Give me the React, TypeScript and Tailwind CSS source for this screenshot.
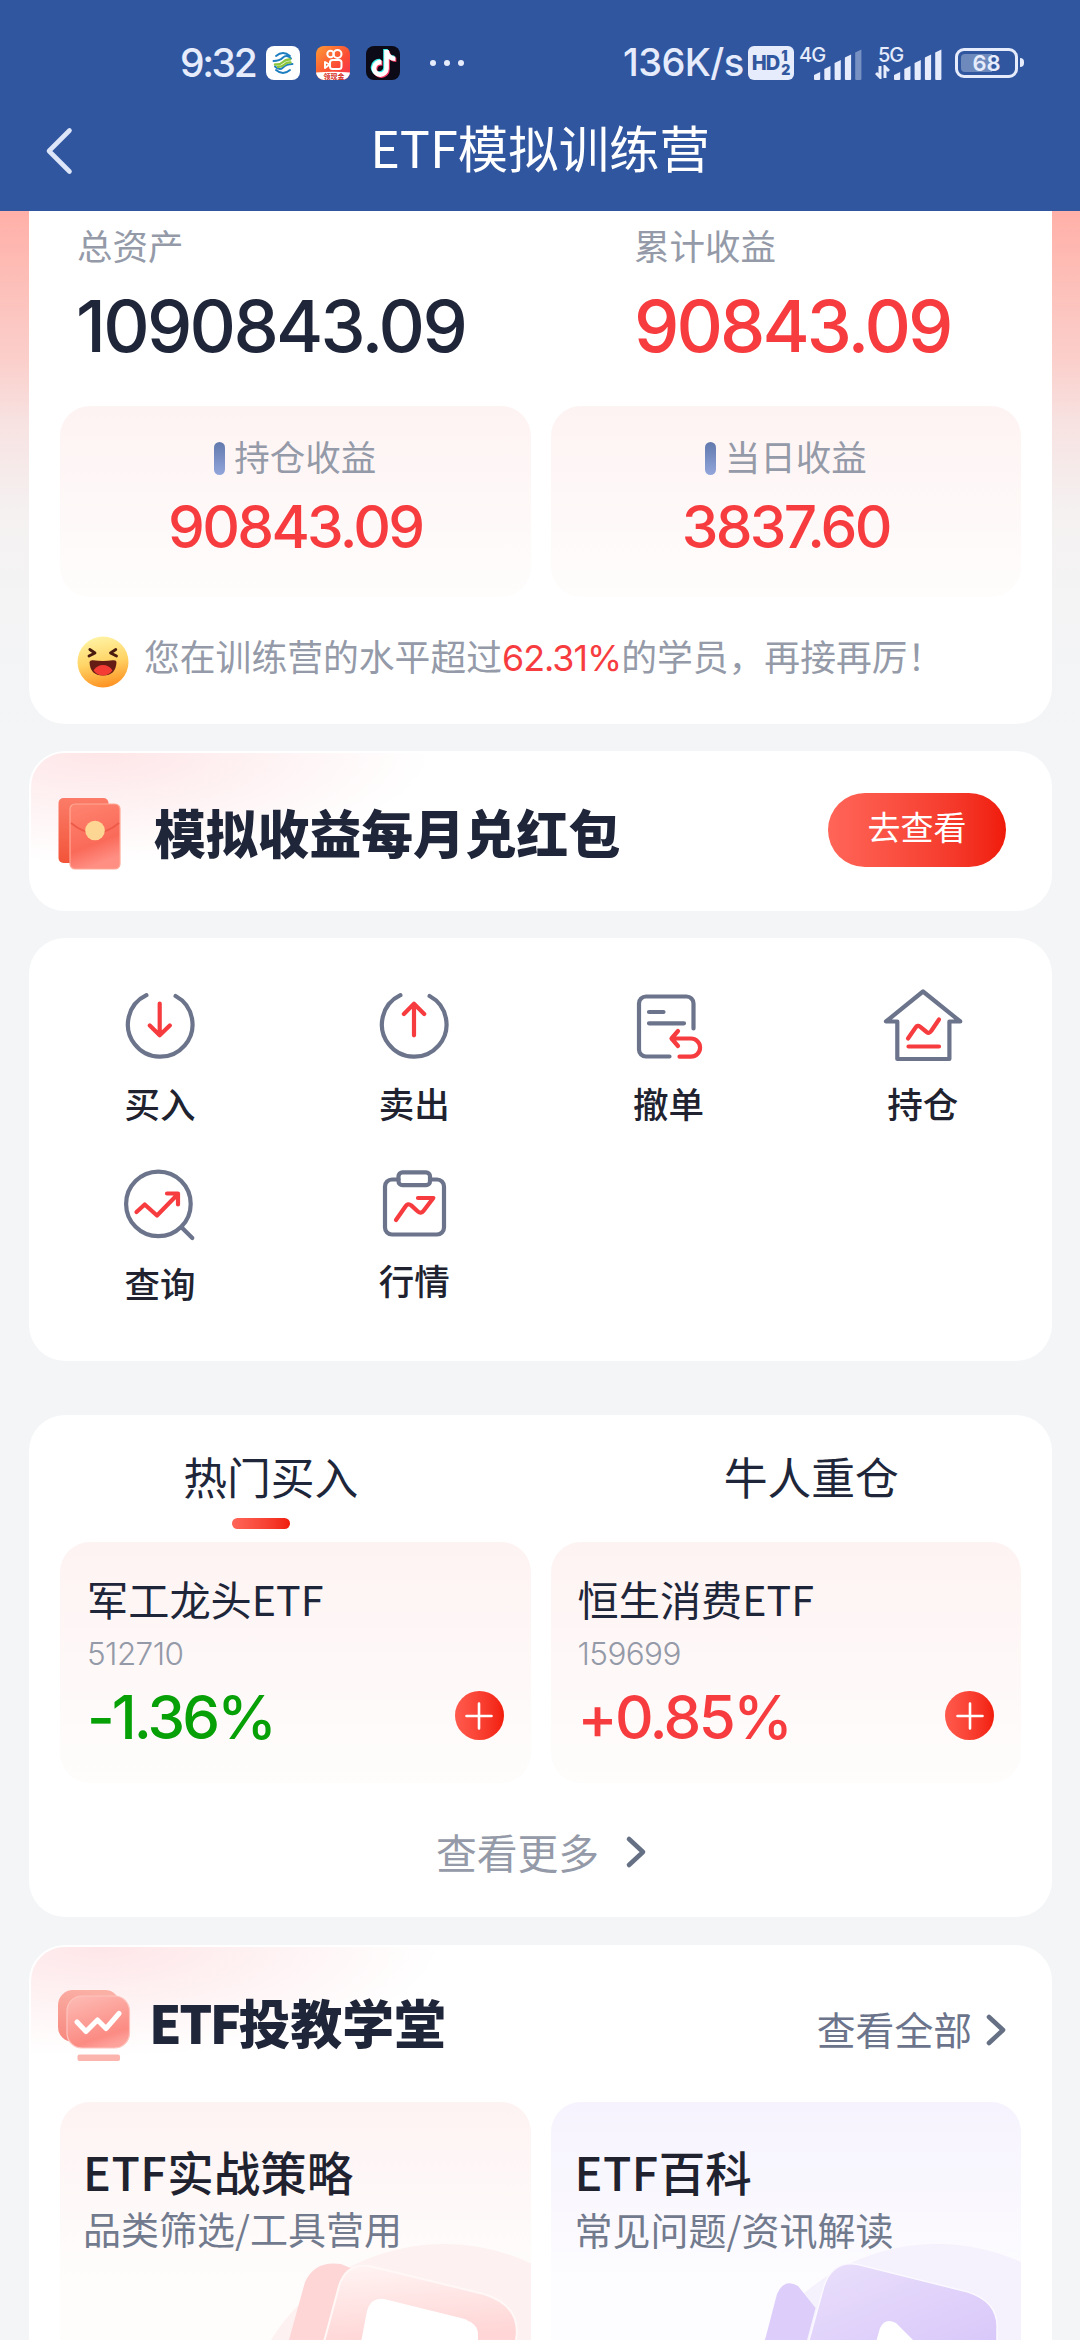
import React from 'react';
import { FaTiktok } from 'react-icons/fa6';

const NUM = "font-['Inter','Noto_Sans_CJK_SC',sans-serif]";

const ACTIONS = [
  { id: 'buy', label: '买入', icon: <BuyIcon />, gap: 'mt-[13px]' },
  { id: 'sell', label: '卖出', icon: <SellIcon />, gap: 'mt-[13px]' },
  { id: 'cancel', label: '撤单', icon: <CancelIcon />, gap: 'mt-[13px]' },
  { id: 'hold', label: '持仓', icon: <HoldIcon />, gap: 'mt-[13px]' },
  { id: 'query', label: '查询', icon: <QueryIcon />, gap: 'mt-4' },
  { id: 'market', label: '行情', icon: <MarketIcon />, gap: 'mt-[13px]' },
];

const HOT_FUNDS = [
  { name: '军工龙头ETF', code: '512710', change: '-1.36%', color: 'text-[#07a007] tracking-[-2.9px]' },
  { name: '恒生消费ETF', code: '159699', change: '+0.85%', color: 'text-[#f73c3f] tracking-[-2.6px]' },
];

function ActionSvg({ children }: { children: React.ReactNode }) {
  return (
    <svg width="80" height="80" viewBox="0 0 80 80" fill="none" stroke="#6b748b" strokeWidth="4.2" strokeLinecap="round" strokeLinejoin="round">
      {children}
    </svg>
  );
}

function BuyIcon() {
  return (
    <ActionSvg>
      <path d="M26.4 9.2A32.3 32.3 0 1 0 55.6 10" />
      <path stroke="#f73c3f" d="M39.7 17.5V49M29.8 39.5L39.7 49.3L49.8 39.5" />
    </ActionSvg>
  );
}

function SellIcon() {
  return (
    <ActionSvg>
      <path d="M26.4 9.2A32.3 32.3 0 1 0 55.6 10" />
      <path stroke="#f73c3f" d="M40 49.3V18M29.9 28L40 17.8L50.2 28" />
    </ActionSvg>
  );
}

function CancelIcon() {
  return (
    <ActionSvg>
      <path d="M64.5 42.5V17.5a7 7 0 0 0-7-7H17a7 7 0 0 0-7 7v46a7 7 0 0 0 7 7h23.5" />
      <path d="M20 26H34.5M20 37.3H55" />
      <path stroke="#f73c3f" d="M49 45L42.5 52.5L49 60M43 52.5H62a9.1 9.1 0 0 1 0 18.2H50.5" />
    </ActionSvg>
  );
}

function HoldIcon() {
  return (
    <ActionSvg>
      <path d="M40 5.5L3 35.5H14.3V73H66.4V35.5H77.3Z" />
      <path stroke="#f73c3f" d="M25 52.5L32.6 41.5Q34.5 38.6 37 40.6L43.6 46Q46.3 48 48.2 45L56 33.5M25.5 60.5H56" />
    </ActionSvg>
  );
}

function QueryIcon() {
  return (
    <ActionSvg>
      <circle cx="38.4" cy="40.9" r="32.3" />
      <path d="M62 64.7L72.3 75" />
      <path stroke="#f73c3f" d="M16.5 49L24.7 41.5L37 52.5L57.5 31.5M47 30.5H58V41.5" />
    </ActionSvg>
  );
}

function MarketIcon() {
  return (
    <ActionSvg>
      <path d="M24.5 16.5H18a7 7 0 0 0-7 7V64.5a7 7 0 0 0 7 7H63a7 7 0 0 0 7-7V23.5a7 7 0 0 0-7-7H56" />
      <rect x="24.5" y="9.3" width="31.5" height="12.9" rx="4" />
      <path stroke="#f73c3f" d="M22 57L31.6 43.2Q34 39.8 37.2 42.4L43.6 48.2Q47 51.4 49.6 47.8L59.3 35H44" />
    </ActionSvg>
  );
}

function Chevron({ className = '' }: { className?: string }) {
  return (
    <svg className={className} width="22" height="34" viewBox="0 0 22 34" fill="none" stroke="#667085" strokeWidth="4.6" strokeLinecap="round" strokeLinejoin="round">
      <path d="M4 4L18 17L4 30" />
    </svg>
  );
}

function SignalBars({ level, className = '' }: { level: number; className?: string }) {
  const heights = [8, 14, 20, 25.5, 30.5];
  return (
    <svg className={className} width="48" height="32" viewBox="0 0 48 32" fill="#e6ecfb">
      {heights.map((h, i) => (
        <path key={h} opacity={i < level ? 1 : 0.4} d={`M${i * 10.3} ${32 - h + 3}l6.2 -3V31a1 1 0 0 1-1 1h-4.2a1 1 0 0 1-1-1z`} />
      ))}
    </svg>
  );
}

function StatusBar() {
  return (
    <div className={`flex h-[83px] items-center pt-[42px] pl-[180px] text-[#e6ecfb] ${NUM}`}>
      <span className="w-[86px] text-[39px] leading-[41px] font-medium tracking-[-2.4px]">9:32</span>
      <svg className="mr-4 shrink-0" width="34" height="34" viewBox="0 0 34 34" fill="none">
        <rect width="34" height="34" rx="8" fill="#fff" />
        <g strokeWidth="1.9" strokeLinecap="round">
          <path stroke="#1d7fc0" d="M10 10q7-6 14 0M7.500 15q6 0 9.500-3.500t8 1M10 24q7 6 14 0M26.500 18q-6 0-9.500 3.500t-8-1" />
          <path stroke="#8cc63f" strokeWidth="2.400" d="M9 18.500q5 .5 8-2.500t7-2.500M12 21q4 0 6.500-2.500t6-2" />
        </g>
      </svg>
      <svg className="mr-4 shrink-0" width="34" height="34" viewBox="0 0 34 34" fill="none">
        <defs>
          <linearGradient id="ks" x1="0" y1="0" x2="1" y2="1">
            <stop stopColor="#ff9a35" />
            <stop offset="0.6" stopColor="#fb4b35" />
            <stop offset="1" stopColor="#f72f52" />
          </linearGradient>
        </defs>
        <rect width="34" height="34" rx="8" fill="url(#ks)" />
        <path d="M0 26.5Q17 25 34 26.5a8 8 0 0 1-8 7.5H8a8 8 0 0 1-8-7.5z" fill="#fff" />
        <g stroke="#fff" strokeWidth="2">
          <circle cx="14.5" cy="8" r="3.2" />
          <circle cx="21.5" cy="8" r="4" />
          <rect x="14" y="14" width="11.5" height="9" rx="2.5" />
          <path d="M13.5 18.5L9 16V22z" strokeLinejoin="round" />
        </g>
        <text x="18" y="33" fontSize="7" fontWeight="700" textAnchor="middle" fill="#d42a22">领现金</text>
      </svg>
      <div className="relative size-[34px] shrink-0 rounded-lg bg-[#0c0a16]">
        <FaTiktok size={27} className="absolute top-[3px] left-[3px] text-[#3df0ea]" />
        <FaTiktok size={27} className="absolute top-[5px] left-[5px] text-[#fb3a64]" />
        <FaTiktok size={27} className="absolute top-1 left-1 text-white" />
      </div>
      <div className="ml-[30px] flex gap-2">
        <i className="size-1.5 rounded-full bg-current" />
        <i className="size-1.5 rounded-full bg-current" />
        <i className="size-1.5 rounded-full bg-current" />
      </div>
      <span className="ml-[159px] w-[125px] text-[38px] leading-[41px] font-medium tracking-[-0.6px] whitespace-nowrap">136K/s</span>
      <div className="flex h-[34px] w-[46px] shrink-0 items-center justify-center rounded-md bg-[#e6ecfb] text-[#31579f]">
        <span className="text-[20px] font-extrabold tracking-[-1px]">HD</span>
        <span className="ml-0.5 flex flex-col text-[14px] leading-[14px] font-extrabold">
          <b>1</b>
          <b>2</b>
        </span>
      </div>
      <div className="flex h-[34px] w-[78px] shrink-0 pl-[5px]">
        <span className="w-[15px] text-[20px] leading-[18px] font-medium tracking-[-1px]">4G</span>
        <SignalBars level={4} className="mt-[2px] shrink-0" />
      </div>
      <div className="flex h-[34px] w-[83px] shrink-0 pl-[3px]">
        <div className="w-[19px]">
          <div className="ml-[3px] h-[19px] w-7 text-[20px] leading-[18px] font-medium tracking-[-1px]">5G</div>
          <svg width="15" height="14" viewBox="0 0 15 14" fill="none" stroke="#e6ecfb" strokeWidth="3">
            <path d="M5 1V12L1 8M10 13V2L14 6" />
          </svg>
        </div>
        <SignalBars level={5} className="mt-[2px] shrink-0" />
      </div>
      <div className="relative flex h-[30px] w-[63px] shrink-0 items-center rounded-[9px] border-[3px] border-current pl-[3px]">
        <div className="h-[18px] w-[31px] rounded-l-[4px] bg-white/30" />
        <span className="absolute inset-0 text-center text-[22px] leading-[25px] font-semibold">68</span>
      </div>
      <div className="ml-0.5 h-[9px] w-1 rounded-r bg-current" />
    </div>
  );
}

function Header() {
  return (
    <header className="h-[211px] bg-[#30569f]">
      <StatusBar />
      <div className="flex h-[128px] items-center">
        <svg className="ml-[44px] mt-2" width="30" height="50" viewBox="0 0 30 50" fill="none" stroke="#dde5f8" strokeWidth="4.6" strokeLinecap="round" strokeLinejoin="round">
          <path d="M25.5 4.500L5 25L25.5 45.5" />
        </svg>
        <h1 className="mr-[74px] flex-1 text-center text-[50.4px] leading-[60px] text-white">ETF模拟训练营</h1>
      </div>
    </header>
  );
}

function Smile() {
  return (
    <svg width="52" height="52" viewBox="0 0 52 52" fill="none" className="shrink-0">
      <defs>
        <linearGradient id="face" x1="0.4" y1="0" x2="0.6" y2="1">
          <stop stopColor="#fff3a4" />
          <stop offset="0.5" stopColor="#ffd465" />
          <stop offset="1" stopColor="#fd9020" />
        </linearGradient>
      </defs>
      <circle cx="26" cy="26" r="25.5" fill="url(#face)" />
      <path d="M12.8 13.5L18 17L12 20M38.800 13.500L33.500 17L39.500 20" stroke="#4a1c10" strokeWidth="2.8" strokeLinecap="round" strokeLinejoin="round" />
      <path d="M12.500 26Q13 24 16 24.300Q26 25.500 36 24.300Q39.500 24 39.500 26Q39 39.500 26 39.500T12.500 26z" fill="#641c14" />
      <path d="M16.500 34.500Q20 29 26 29T35.500 34.500Q31.500 39.500 26 39.500T16.500 34.500z" fill="#f43c34" />
    </svg>
  );
}

function StatBox({ label, value }: { label: string; value: string }) {
  return (
    <div className="h-[191px] rounded-[30px] bg-linear-to-b from-[#fef3f3] to-[#fefdfc] pt-[30px] text-center">
      <div className="flex h-10 items-center justify-center">
        <i className="mt-1 mr-[9px] h-[33px] w-[11px] rounded-full bg-linear-to-b from-[#6179ad] to-[#93a6dc]" />
        <span className="text-[35.5px] leading-10 text-[#949aa8]">{label}</span>
      </div>
      <div className={`mt-[15px] text-[58.5px] leading-[72px] font-medium tracking-[-2.7px] text-[#f73c3f] ${NUM}`}>{value}</div>
    </div>
  );
}

function AssetsCard() {
  return (
    <section className="h-[513px] rounded-b-[36px] bg-white px-[31px] pt-3.5">
      <div className="flex pl-[17px] text-[35.5px] leading-10 text-[#949aa8]">
        <div className="w-[557px]">总资产</div>
        <div>累计收益</div>
      </div>
      <div className={`mt-[21px] flex pl-[16px] text-[72px] leading-[80px] font-medium ${NUM}`}>
        <div className="w-[558px] tracking-[-2.7px] text-[#20263a]">1090843.09</div>
        <div className="tracking-[-2.9px] text-[#f73c3f]">90843.09</div>
      </div>
      <div className="mt-10 grid grid-cols-2 gap-5">
        <StatBox label="持仓收益" value="90843.09" />
        <StatBox label="当日收益" value="3837.60" />
      </div>
      <div className="mt-[39px] flex items-start pl-[17px]">
        <Smile />
        <p className="ml-[15px] text-[35.8px] leading-[39px] whitespace-nowrap text-[#949aa8]">
          您在训练营的水平超过<span className={`tracking-[-1px] text-[#f73c3f] ${NUM}`}>62.31%</span>的学员，再接再厉！
        </p>
      </div>
    </section>
  );
}

function RedPacketCard() {
  return (
    <section className="mt-[27px] flex h-[160px] items-center rounded-[36px] border-2 border-white bg-white bg-[radial-gradient(ellipse_330px_110px_at_70px_0px,#fee6e8,#ffffff)] pr-[44px] pl-[27px]">
      <svg className="mt-1.5" width="64" height="74" viewBox="0 0 64 74" fill="none">
        <defs>
          <linearGradient id="rpBack" x1="0" y1="0" x2="0" y2="1">
            <stop stopColor="#fb7c68" />
            <stop offset="1" stopColor="#f25439" />
          </linearGradient>
          <linearGradient id="rpFront" x1="0" y1="0" x2="0.3" y2="1">
            <stop stopColor="#fe8570" />
            <stop offset="0.7" stopColor="#fa6a59" />
            <stop offset="1" stopColor="#ff8e83" />
          </linearGradient>
        </defs>
        <rect x="0.5" y="1" width="50" height="65" rx="5" fill="url(#rpBack)" />
        <rect x="12" y="7" width="50" height="65" rx="5" fill="url(#rpFront)" stroke="#ffa896" strokeWidth="1.2" />
        <path d="M13 26Q25 36 37 36T61 26" stroke="#ee5a48" strokeWidth="1.8" />
        <circle cx="37" cy="33.5" r="9.8" fill="#fcd692" />
      </svg>
      <h2 className="mt-0.5 ml-[32px] flex-1 text-[51.8px] leading-[60px] font-black text-[#20263a]">模拟收益每月兑红包</h2>
      <button className="mt-[-2px] h-[74px] w-[178px] rounded-full bg-linear-to-r from-[#ff6558] to-[#f01a08] pb-1.5 text-[33px] text-white">去查看</button>
    </section>
  );
}

function ActionsCard() {
  return (
    <section className="mt-[27px] h-[423px] rounded-[36px] bg-white pt-12 pl-1">
      <div className="grid w-[1017px] grid-cols-4 gap-y-[36px]">
        {ACTIONS.map((a) => (
          <div key={a.id} className="flex flex-col items-center">
            {a.icon}
            <span className={`text-[35.5px] leading-[48px] font-medium text-[#20232f] ${a.gap}`}>{a.label}</span>
          </div>
        ))}
      </div>
    </section>
  );
}

function HotCard() {
  return (
    <section className="mt-[54px] h-[502px] rounded-[36px] bg-white px-[31px] pt-[33px]">
      <div className="-mx-[59px] grid grid-cols-2 text-center text-[43.8px] leading-[56px] text-[#20263a]">
        <span>热门买入</span>
        <span className="pl-0.5">牛人重仓</span>
      </div>
      <div className="mt-[14px] ml-[172px] h-[11px] w-[58px] rounded-full bg-linear-to-r from-[#ff6558] to-[#f01a08]" />
      <div className="mt-[13px] grid grid-cols-2 gap-5">
        {HOT_FUNDS.map((f) => (
          <div key={f.code} className="h-[241px] rounded-[30px] bg-linear-to-b from-[#fef3f3] to-[#fefdfc] px-[27px] pt-[31px]">
            <div className="text-[41.2px] leading-[50px] text-[#20263a]">{f.name}</div>
            <div className={`mt-[11px] text-[31.5px] leading-10 font-light tracking-[-0.6px] text-[#949aa8] ${NUM}`}>{f.code}</div>
            <div className="mt-[3px] flex items-center justify-between">
              <span className={`text-[60px] leading-[80px] font-medium ${NUM} ${f.color}`}>{f.change}</span>
              <div className="mt-[-3px] flex size-[49px] items-center justify-center rounded-full bg-linear-to-r from-[#ff5a4d] to-[#f21c0a]">
                <svg width="28" height="28" viewBox="0 0 28 28" stroke="#fff" strokeWidth="2.6" strokeLinecap="round">
                  <path d="M14 1.5V26.5M1.5 14H26.5" />
                </svg>
              </div>
            </div>
          </div>
        ))}
      </div>
      <div className="mt-[44px] flex items-center justify-center pl-0.5 text-[40.8px] leading-[50px] text-[#949aa8]">
        查看更多
        <Chevron className="ml-[26px]" />
      </div>
    </section>
  );
}

function PinkArt() {
  return (
    <svg className="absolute inset-0" width="471" height="238" viewBox="0 0 471 238" fill="none">
      <defs>
        <linearGradient id="pinkFront" x1="0.2" y1="0" x2="0.4" y2="1">
          <stop stopColor="#fff3f2" />
          <stop offset="1" stopColor="#ffd5d5" />
        </linearGradient>
      </defs>
      <circle cx="384" cy="346" r="204" fill="#fdf1f1" />
      <path d="M229 238L245 180Q255 158 281 162L300 170L270 238z" fill="#fed6d6" />
      <path d="M264 240L279 184Q287 159 313 165L424 192Q462 204 456 238V240z" fill="url(#pinkFront)" stroke="#fff8f7" strokeWidth="2" />
      <path d="M301 240L307 209Q311 195 324 197L401 216Q418 221 418 232V240z" fill="#fff" />
    </svg>
  );
}

function PurpleArt() {
  return (
    <svg className="absolute inset-0" width="471" height="238" viewBox="0 0 471 238" fill="none">
      <defs>
        <linearGradient id="violet" x1="0" y1="0" x2="1" y2="1">
          <stop stopColor="#eadffb" />
          <stop offset="1" stopColor="#d8c8fa" />
        </linearGradient>
      </defs>
      <circle cx="386" cy="346" r="204" fill="#f5f1fd" />
      <path d="M214 238L226 192Q233 176 247 184L264.5 206L256 238z" fill="#dccdfa" />
      <path d="M257.5 240L273 184Q282 158 307 162.5L417 190Q448 200 446 228V240z" fill="url(#violet)" stroke="#fbf9ff" strokeWidth="1.5" />
      <path d="M325 240L329 226Q334 215 345 221L364 240z" fill="#fff" />
    </svg>
  );
}

function SchoolCard() {
  return (
    <section className="mt-[28px] h-[420px] rounded-t-[36px] border-2 border-white bg-white bg-[radial-gradient(ellipse_340px_110px_at_70px_0px,#fee6e8,#ffffff)] px-[29px] pt-[42px]">
      <div className="flex h-[76px] items-start">
        <svg className="-ml-0.5 shrink-0" width="76" height="74" viewBox="-2 0 76 74" fill="none">
          <defs>
            <linearGradient id="schBack" x1="0.5" y1="0" x2="0.2" y2="1">
              <stop stopColor="#fbb0a6" />
              <stop offset="1" stopColor="#f7897f" />
            </linearGradient>
            <linearGradient id="schFront" x1="0.2" y1="0" x2="0.6" y2="1">
              <stop stopColor="#fdb9b2" />
              <stop offset="0.8" stopColor="#fb8b83" />
              <stop offset="1" stopColor="#fda39c" />
            </linearGradient>
          </defs>
          <rect x="-2" y="1" width="62" height="52" rx="15" fill="url(#schBack)" />
          <rect x="7" y="7" width="62.5" height="52" rx="15" fill="url(#schFront)" stroke="#fdc4be" strokeWidth="1.2" />
          <path d="M17 33L26 42.5L37.5 31L46 39.5L59 24.5" stroke="#fff" strokeWidth="5" strokeLinecap="round" strokeLinejoin="round" />
          <rect x="17.5" y="65.5" width="42.5" height="6.5" rx="2" fill="#fcb5ae" />
        </svg>
        <h2 className="mt-[5px] ml-[15px] flex-1 text-[51.8px] leading-[56px] font-black text-[#20263a]">
          <span className="tracking-[-2.5px]">ETF</span>投教学堂
        </h2>
        <span className="mt-[14px] text-[38.8px] leading-[50px] text-[#6b748b]">查看全部</span>
        <Chevron className="mt-[24px] mr-[14px] ml-[13px]" />
      </div>
      <div className="mt-[37px] grid grid-cols-2 gap-5">
        <div className="relative h-[300px] overflow-hidden rounded-[30px] bg-linear-to-b from-[#fef3f3] to-[#fefdfc] to-60%">
          <PinkArt />
          <div className="relative pt-[42px] pl-[23px]">
            <div className="text-[46.5px] leading-[54px] font-medium text-[#20232f]"><span className="tracking-[0.5px]">ETF</span>实战策略</div>
            <div className="mt-[5px] text-[38px] leading-[50px] text-[#727a8e]">品类筛选/工具营用</div>
          </div>
        </div>
        <div className="relative h-[300px] overflow-hidden rounded-[30px] bg-linear-to-b from-[#f6f3fe] to-[#fdfcfe] to-60%">
          <PurpleArt />
          <div className="relative pt-[42px] pl-[24px]">
            <div className="text-[46.5px] leading-[54px] font-medium text-[#20232f]"><span className="tracking-[0.5px]">ETF</span>百科</div>
            <div className="mt-1.5 text-[38px] leading-[50px] text-[#727a8e]">常见问题/资讯解读</div>
          </div>
        </div>
      </div>
    </section>
  );
}

export default function App() {
  return (
    <div className="h-[2340px] w-[1080px] overflow-hidden bg-[#f3f5f7] font-['Noto_Sans_CJK_SC',sans-serif]">
      <Header />
      <main className="bg-[linear-gradient(to_bottom,#ffb0a8_0px,#fbcfcb_150px,#f7e2e1_210px,#f5f1f1_300px,#f4f4f5_390px,#f3f5f7_560px)] pr-[28px] pl-[29px]">
        <AssetsCard />
        <RedPacketCard />
        <ActionsCard />
        <HotCard />
        <SchoolCard />
      </main>
    </div>
  );
}
